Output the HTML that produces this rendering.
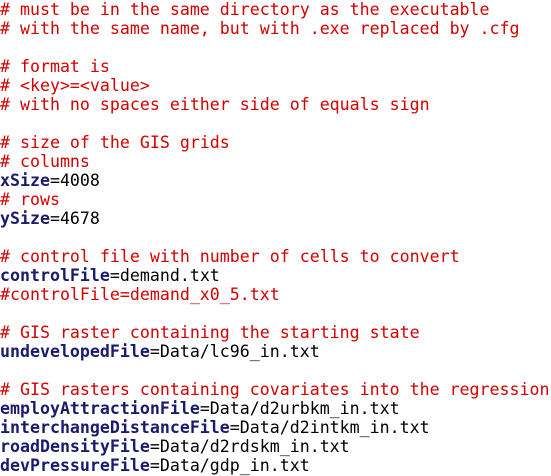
<!DOCTYPE html>
<html><head><meta charset="utf-8"><style>
html,body{margin:0;padding:0;background:#fff;width:551px;height:476px;overflow:hidden}
pre{margin:0;padding:0 0 0 0;font-family:"DejaVu Sans Mono","Liberation Mono",monospace;font-size:16.6px;line-height:19px;color:#000}
.c{color:#d40000}
.k{color:#1a1a6e;font-weight:bold}
</style></head><body><pre><span class="c"># must be in the same directory as the executable
# with the same name, but with .exe replaced by .cfg</span>

<span class="c"># format is
# &lt;key&gt;=&lt;value&gt;
# with no spaces either side of equals sign</span>

<span class="c"># size of the GIS grids
# columns</span>
<span class="k">xSize</span>=4008
<span class="c"># rows</span>
<span class="k">ySize</span>=4678

<span class="c"># control file with number of cells to convert</span>
<span class="k">controlFile</span>=demand.txt
<span class="c">#controlFile=demand_x0_5.txt</span>

<span class="c"># GIS raster containing the starting state</span>
<span class="k">undevelopedFile</span>=Data/lc96_in.txt

<span class="c"># GIS rasters containing covariates into the regression</span>
<span class="k">employAttractionFile</span>=Data/d2urbkm_in.txt
<span class="k">interchangeDistanceFile</span>=Data/d2intkm_in.txt
<span class="k">roadDensityFile</span>=Data/d2rdskm_in.txt
<span class="k">devPressureFile</span>=Data/gdp_in.txt</pre></body></html>
